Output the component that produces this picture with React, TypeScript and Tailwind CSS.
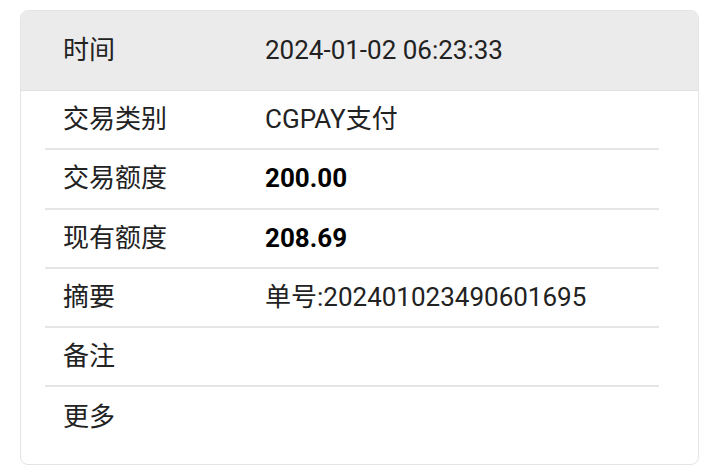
const rows: { label: string; value: string; bold?: boolean }[] = [
  { label: '交易类别', value: 'CGPAY支付' },
  { label: '交易额度', value: '200.00', bold: true },
  { label: '现有额度', value: '208.69', bold: true },
  { label: '摘要', value: '单号:202401023490601695' },
  { label: '备注', value: '' },
  { label: '更多', value: '' },
];

const App = () => {
  return (
    <div
      className="w-[720px] h-[473px] bg-white pt-[10px] pl-5 pr-[21px]"
      style={{ fontFamily: 'Roboto, "Noto Sans CJK SC", sans-serif' }}
    >
      <div className="border border-[#e4e4e4] rounded-lg overflow-hidden bg-white h-[455px] text-[26px] text-[#222]">
        {/* Header */}
        <div className="h-[80px] bg-[#ebebeb] border-b border-[#e0e0e0] flex items-center pl-[42px]">
          <span className="w-[202px] shrink-0">时间</span>
          <span>2024-01-02 06:23:33</span>
        </div>

        {/* Detail rows */}
        <div className="ml-6 mr-[39px]">
          {rows.map((row, i) => (
            <div
              key={row.label}
              className={
                i < rows.length - 1
                  ? 'h-[59.3px] flex items-center pl-[18px] border-b-2 border-[#e5e5e5]'
                  : 'h-[59.3px] flex items-center pl-[18px]'
              }
            >
              <span className="w-[202px] shrink-0">{row.label}</span>
              <span className={row.bold ? 'font-bold text-black' : ''}>{row.value}</span>
            </div>
          ))}
        </div>
      </div>
    </div>
  );
};

export default App;
